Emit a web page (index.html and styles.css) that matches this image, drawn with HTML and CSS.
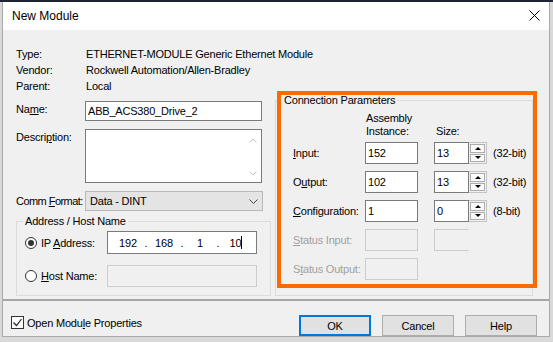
FILE: index.html
```html
<!DOCTYPE html>
<html>
<head>
  <title>New Module</title>
  <link rel="stylesheet" href="styles.css">
</head>
<body>
  <div class="dialog">
    <div class="titlebar">
      <span class="title">New Module</span>
      <svg class="close" width="11" height="11" viewBox="0 0 11 11">
        <path d="M0.5 0.5 L10.5 10.5 M10.5 0.5 L0.5 10.5" stroke="#000" stroke-width="1" fill="none"/>
      </svg>
    </div>

    <div class="content">
      <dl class="info">
        <dt>Type:</dt>   <dd>ETHERNET-MODULE Generic Ethernet Module</dd>
        <dt>Vendor:</dt> <dd>Rockwell Automation/Allen-Bradley</dd>
        <dt>Parent:</dt> <dd>Local</dd>
      </dl>

      <div class="main">
        <div class="left">
          <div class="field">
            <label>Na<u>m</u>e:</label>
            <input class="edit" type="text" value="ABB_ACS380_Drive_2">
          </div>
          <div class="field">
            <label>Descri<u>p</u>tion:</label>
            <div class="memo">
              <div class="vscroll">
                <svg width="8" height="5" viewBox="0 0 8 5"><path d="M0.5 4.5 L4 1 L7.5 4.5" stroke="#c2c2c2" fill="none"/></svg>
                <svg width="8" height="5" viewBox="0 0 8 5"><path d="M0.5 0.5 L4 4 L7.5 0.5" stroke="#c2c2c2" fill="none"/></svg>
              </div>
            </div>
          </div>
          <div class="field centered">
            <label class="tight">Comm <u>F</u>ormat:</label>
            <div class="combo">
              <span>Data - DINT</span>
              <svg width="9" height="5" viewBox="0 0 9 5"><path d="M0.5 0.5 L4.5 4.5 L8.5 0.5" stroke="#444" fill="none"/></svg>
            </div>
          </div>

          <fieldset class="group address">
            <legend>Address / Host Name</legend>
            <div class="addr-row">
              <span class="opt"><span class="radio checked"></span><span>IP <u>A</u>ddress:</span></span>
              <div class="ip">
                <span class="oct">192</span><span class="dot">.</span>
                <span class="oct">168</span><span class="dot">.</span>
                <span class="oct">1</span><span class="dot">.</span>
                <span class="oct">10<i class="caret"></i></span>
              </div>
            </div>
            <div class="addr-row">
              <span class="opt"><span class="radio"></span><span><u>H</u>ost Name:</span></span>
              <div class="edit host disabled"></div>
            </div>
          </fieldset>
        </div>

        <div class="conn-wrap">
          <fieldset class="group conn">
            <legend>Connection Parameters</legend>
            <div class="params param-head">
              <span></span>
              <span class="c2">Assembly<br>Instance:</span>
              <span class="c3">Size:</span>
              <span></span>
            </div>
            <div class="params param-rows">
              <label><u>I</u>nput:</label>
              <input class="num" type="text" value="152">
              <span class="spin"><input class="num small" type="text" value="13"><span class="spin-btns"><span class="spin-btn"><i class="up"></i></span><span class="spin-btn"><i class="down"></i></span></span></span>
              <span>(32-bit)</span>

              <label>O<u>u</u>tput:</label>
              <input class="num" type="text" value="102">
              <span class="spin"><input class="num small" type="text" value="13"><span class="spin-btns"><span class="spin-btn"><i class="up"></i></span><span class="spin-btn"><i class="down"></i></span></span></span>
              <span>(32-bit)</span>

              <label><u>C</u>onfiguration:</label>
              <input class="num" type="text" value="1">
              <span class="spin"><input class="num small" type="text" value="0"><span class="spin-btns"><span class="spin-btn"><i class="up"></i></span><span class="spin-btn"><i class="down"></i></span></span></span>
              <span>(8-bit)</span>

              <label class="off"><u>S</u>tatus Input:</label>
              <span class="num disabled"></span>
              <span class="num small disabled open"></span>
              <span></span>

              <label class="off">S<u>t</u>atus Output:</label>
              <span class="num disabled"></span>
              <span></span>
              <span></span>
            </div>
          </fieldset>
          <div class="highlight"></div>
        </div>
      </div>
    </div>

    <div class="separator"></div>

    <div class="footer">
      <span class="check">
        <span class="box">
          <svg width="11" height="11" viewBox="0 0 11 11"><path d="M1.5 5.5 L4.5 8.5 L9.5 2" stroke="#222" stroke-width="1.2" fill="none"/></svg>
        </span>
        <span>Open Modu<u>l</u>e Properties</span>
      </span>
      <div class="buttons">
        <button class="btn default">OK</button>
        <button class="btn">Cancel</button>
        <button class="btn">Help</button>
      </div>
    </div>
  </div>
</body>
</html>
```

FILE: styles.css
```css
html, body { margin:0; }

body {
  width:553px; height:342px; overflow:hidden;
  box-sizing:border-box;
  background:#d9d9d9;
  border-top:2px solid #1d2434;
  padding-left:2px;
  font-family:"Liberation Sans", Arial, sans-serif;
  font-size:11px;
  letter-spacing:-0.2px;
  color:#000;
}

.dialog {
  width:548px;
  box-sizing:border-box;
  background:#f0f0f0;
  border:1px solid #a9a9a9;
  border-top:0;
}

.titlebar {
  height:28px;
  background:#fff;
  display:flex; align-items:center; justify-content:space-between;
  padding:0 9px;
}
.title { font-size:12px; letter-spacing:0; }
.close { margin-top:-1px; }

.content { padding:16px 16px 0 13px; }

/* module info */
.info { display:grid; grid-template-columns:70px auto; margin:0; line-height:16px; }
.info dt, .info dd { margin:0; white-space:nowrap; }

.main { display:grid; grid-template-columns:255px 258px; column-gap:4px; align-items:start; }

/* left column */
.left { padding-top:7px; }
.field { display:flex; align-items:flex-start; }
.field + .field { margin-top:8px; }
.field label { width:69px; flex:none; line-height:14px; padding-top:1px; white-space:nowrap; }
.field label.tight { letter-spacing:-0.55px; }
.field.centered { align-items:center; }
.field.centered label { padding-top:0; }

.edit {
  width:177px; height:20px; box-sizing:border-box;
  border:1px solid #7a7a7a; background:#fff;
  font:inherit; letter-spacing:inherit; color:#000;
  padding:0 2px; margin:0; outline:none;
}
.edit.disabled, .num.disabled { border-color:#cccccc; background:#f0f0f0; }

.memo {
  width:177px; height:54px; box-sizing:border-box;
  border:1px solid #7a7a7a; background:#fff;
  display:flex; justify-content:flex-end;
}
.vscroll {
  width:17px;
  display:flex; flex-direction:column; justify-content:space-between; align-items:center;
  padding:8px 0 6px;
}

.combo {
  width:178px; height:20px; box-sizing:border-box;
  border:1px solid #b8b8b8; background:#e4e4e4;
  display:flex; align-items:center; justify-content:space-between;
  padding:0 4px 0 4px;
}

/* group boxes */
.group { border:1px solid #dcdcdc; margin:0; min-width:0; }
.group legend { padding:0 2px; line-height:12px; }

.address { margin-top:4px; padding:4px 0 8px 8px; }
.address legend { margin-left:-2px; }
.addr-row { display:grid; grid-template-columns:82px 150px; align-items:center; }
.addr-row + .addr-row { margin-top:11px; }
.opt { display:flex; align-items:center; gap:4px; white-space:nowrap; }

.radio {
  width:12px; height:12px; box-sizing:border-box;
  border:1px solid #333; border-radius:50%; background:#fff;
  display:grid; place-items:center;
}
.radio.checked::after { content:""; width:6px; height:6px; border-radius:50%; background:#333; }

.ip {
  width:150px; height:23px; box-sizing:border-box;
  border:1px solid #7a7a7a; background:#fff;
  display:flex; align-items:center; padding-left:6px;
}
.oct { width:28px; text-align:center; }
.dot { width:8px; text-align:center; }
.caret { display:inline-block; width:1px; height:13px; background:#000; vertical-align:-2px; }
.edit.host { width:150px; height:22px; }

/* connection parameters */
.conn-wrap { position:relative; }
.conn { height:202px; box-sizing:border-box; padding:6px 0 0 17px; }
.conn legend { margin-left:-11px; }

.params { display:grid; grid-template-columns:72px 69px 59px auto; }
.param-head { line-height:13px; margin-bottom:4px; }
.param-head .c2 { padding-left:1px; }
.param-head .c3 { padding-left:2px; align-self:end; }
.param-rows { grid-auto-rows:22px; row-gap:7px; align-items:center; }
.param-rows label { white-space:nowrap; }
.param-rows label.off { color:#a0a0a0; }

.num {
  width:53px; height:22px; box-sizing:border-box;
  border:1px solid #7a7a7a; background:#fff;
  font:inherit; letter-spacing:inherit; color:#000;
  padding:0 2px; margin:0; outline:none; display:block;
}
.num.small { width:35px; }
.num.open { border-right-color:transparent; }

.spin { display:flex; }
.spin-btns {
  width:18px; height:22px; box-sizing:border-box;
  display:flex; flex-direction:column; gap:1px;
  padding:1px; border:1px solid #c4c4c4; border-left:0; background:#f0f0f0;
}
.spin-btn {
  flex:1; box-sizing:border-box;
  border:1px solid #adadad; background:#fafafa;
  display:grid; place-items:center;
}
.spin-btn i { width:0; height:0; border-left:3px solid transparent; border-right:3px solid transparent; }
.spin-btn i.up { border-bottom:3px solid #000; }
.spin-btn i.down { border-top:3px solid #000; }

.highlight {
  position:absolute; left:2px; top:-3px;
  width:260px; height:197px; box-sizing:border-box;
  border:4px solid #ff6a00;
  pointer-events:none;
}

/* bottom */
.separator { height:2px; background:#a6a6a6; margin-top:3px; }

.footer {
  display:flex; justify-content:space-between; align-items:flex-start;
  padding:14px 12px 0 8px;
}
.check { display:flex; align-items:center; gap:3px; margin-top:1px; height:13px; white-space:nowrap; }
.box {
  width:13px; height:13px; box-sizing:border-box;
  border:1px solid #333; background:#fff;
  display:grid; place-items:center;
}
.buttons { display:flex; gap:11px; }
.btn {
  width:72px; height:21px; box-sizing:border-box;
  border:1px solid #adadad; background:#e1e1e1;
  font:inherit; letter-spacing:inherit; color:#000;
  padding:0; margin:0;
}
.btn.default { border:2px solid #0078d7; }
```
